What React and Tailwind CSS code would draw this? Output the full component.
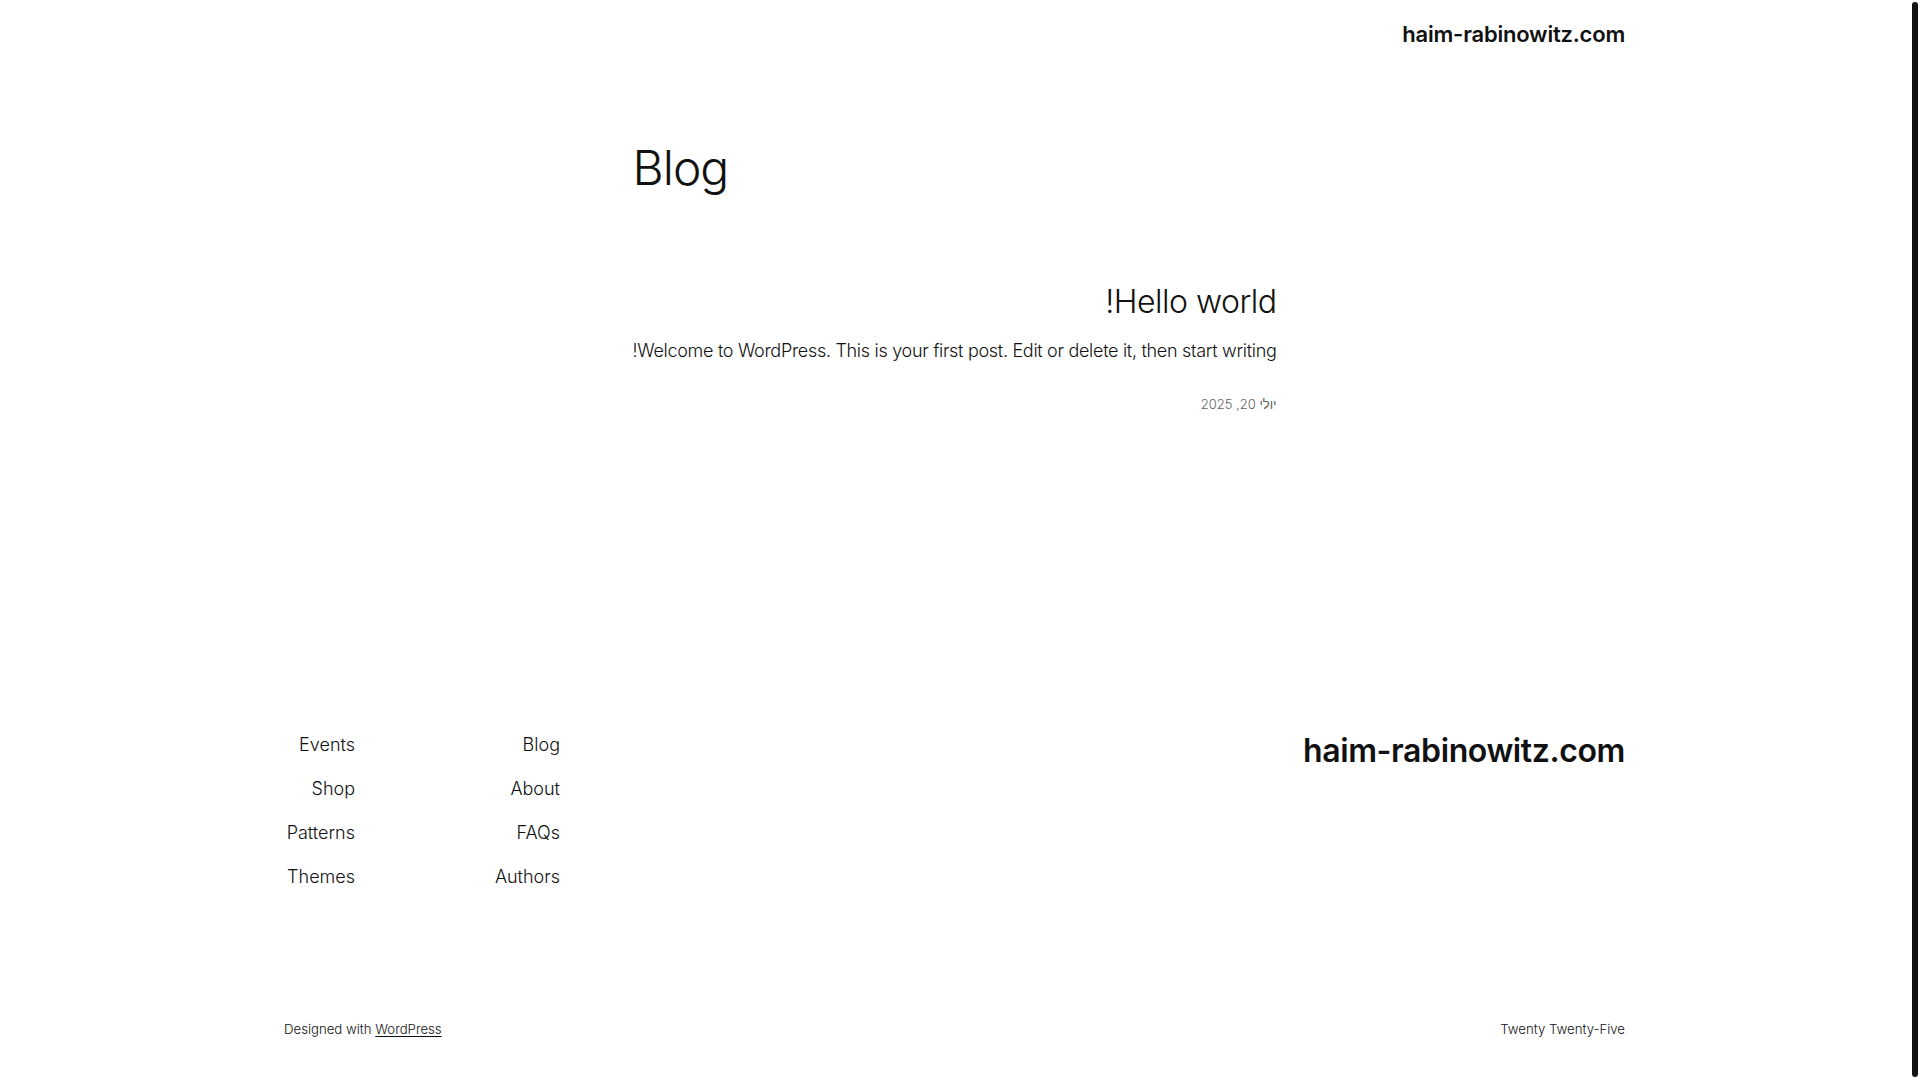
export default function App() {
  const font = "font-['Inter','Noto_Sans',sans-serif]";
  return (
    <div className={`relative h-[1080px] w-[1920px] overflow-hidden bg-white text-[#111111] ${font}`}>
      <div className="w-[1909px]">
        <div className="mx-auto w-[1341px]">
          {/* Header */}
          <header className="flex justify-end pt-[20px]">
            <div className="text-[22px] leading-[28px] font-semibold tracking-[-0.2px]">haim-rabinowitz.com</div>
          </header>

          {/* Main */}
          <main className="mx-auto w-[644px]">
            <h1 className="mt-[91px] text-left text-[48px] leading-[58px] font-light tracking-[-1px]">Blog</h1>
            <div dir="rtl" className="text-right">
              <h2 className="mt-[85px] text-[32px] leading-[40px] font-light tracking-[-0.5px]">Hello world!</h2>
              <p className="mt-[15px] whitespace-nowrap text-[18px] leading-[28px] font-light tracking-[-0.3px]">
                Welcome to WordPress. This is your first post. Edit or delete it, then start writing!
              </p>
              <div className="mt-[29px] text-[13px] leading-[20px] font-light text-[#5f5f5f]">יולי 20, 2025</div>
            </div>
          </main>

          {/* Footer */}
          <footer className="mt-[319px]">
            <div className="flex items-start justify-between">
              <nav className="flex text-[18px] leading-[24px] font-light">
                <div className="flex w-[71px] flex-col items-end gap-[20px] whitespace-nowrap">
                  <span>Events</span>
                  <span>Shop</span>
                  <span>Patterns</span>
                  <span>Themes</span>
                </div>
                <div className="flex w-[205px] flex-col items-end gap-[20px] whitespace-nowrap">
                  <span>Blog</span>
                  <span>About</span>
                  <span>FAQs</span>
                  <span>Authors</span>
                </div>
              </nav>
              <div className="-mt-[2px] text-[32px] leading-[40px] font-semibold tracking-[-0.4px]">haim-rabinowitz.com</div>
            </div>
            <div className="mt-[130px] flex items-center justify-between text-[13.2px] leading-[20px] font-light">
              <div>
                Designed with <span className="underline underline-offset-2">WordPress</span>
              </div>
              <div>Twenty Twenty-Five</div>
            </div>
          </footer>
        </div>
      </div>
      <div className="absolute right-[2px] top-[2px] bottom-[3px] w-[6px] rounded-full bg-[#111111]" />
    </div>
  );
}
